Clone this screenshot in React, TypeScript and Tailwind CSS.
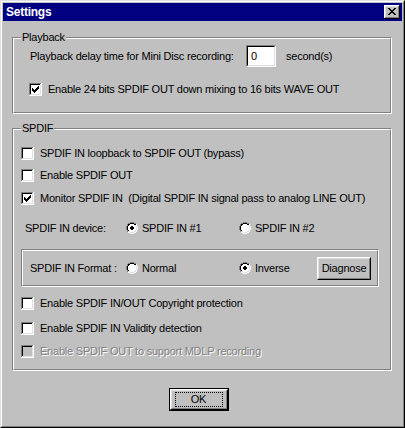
import { ReactNode } from 'react';

const COLORS: Record<string, string> = {
  G: '#808080',
  K: '#000000',
  W: '#ffffff',
  L: '#dfdfdf',
  S: '#c0c0c0',
};

// draws a small pixel map as crisp svg rects
function Pixels({ rows, w, h }: { rows: string[]; w: number; h: number }) {
  const rects: ReactNode[] = [];
  rows.forEach((row, y) => {
    row.split('').forEach((c, x) => {
      if (c === '.') return;
      rects.push(<rect key={`${x}-${y}`} x={x} y={y} width={1} height={1} fill={COLORS[c]} />);
    });
  });
  return (
    <svg width={w} height={h} viewBox={`0 0 ${w} ${h}`} shapeRendering="crispEdges" className="shrink-0 block">
      {rects}
    </svg>
  );
}

const RADIO = [
  '....GGGG....',
  '..GGKKKKGG..',
  '.GKKWWWWKKW.',
  '.GKWWWWWWLW.',
  'GKWWWWWWWWLW',
  'GKWWWWWWWWLW',
  'GKWWWWWWWWLW',
  'GKWWWWWWWWLW',
  '.GKWWWWWWLW.',
  '.GLLWWWWLLW.',
  '..WWLLLLWW..',
  '....WWWW....',
];

const DOT = ['....KK....', '...KKKK...', '...KKKK...', '....KK....'];

function Radio({ on }: { on?: boolean }) {
  const rows = RADIO.map((r, y) => {
    if (!on || y < 4 || y > 7) return r;
    const d = DOT[y - 4];
    return r
      .split('')
      .map((c, x) => (x >= 1 && x <= 10 && d[x - 1] === 'K' ? 'K' : c))
      .join('');
  });
  return <Pixels rows={rows} w={12} h={12} />;
}

const CHECK = ['......X', '.....XX', 'X...XXX', 'XX.XXX.', 'XXXXX..', '.XXX...', '..X....'];
const CROSS = ['XX....XX', '.XX..XX.', '..XXXX..', '...XX...', '..XXXX..', '.XX..XX.', 'XX....XX'];

function Checkbox({ on, disabled }: { on?: boolean; disabled?: boolean }) {
  const fill = disabled ? 'S' : 'W';
  const rows: string[] = [];
  for (let y = 0; y < 13; y++) {
    let r = '';
    for (let x = 0; x < 13; x++) {
      let c = 'W';
      if (y === 12 || x === 12) c = 'W';
      else if (y === 0 || x === 0) c = 'G';
      else if (y === 11 || x === 11) c = 'L';
      else if (y === 1 || x === 1) c = 'K';
      else {
        c = fill;
        const cy = y - 3;
        const cx = x - 3;
        if (on && cy >= 0 && cy < 7 && cx >= 0 && cx < 7 && CHECK[cy][cx] === 'X') c = 'K';
      }
      r += c;
    }
    rows.push(r);
  }
  return <Pixels rows={rows} w={13} h={13} />;
}

// title bar close button, bevel + cross in one bitmap
function CloseButton() {
  const rows: string[] = [];
  for (let y = 0; y < 14; y++) {
    let r = '';
    for (let x = 0; x < 16; x++) {
      let c = 'S';
      if (x === 15 || y === 13) c = 'K';
      else if (x === 0 || y === 0) c = 'W';
      else if (x === 14 || y === 12) c = 'G';
      else if (x === 1 || y === 1) c = 'L';
      else {
        const cy = y - 3;
        const cx = x - 4;
        if (cy >= 0 && cy < 7 && cx >= 0 && cx < 8 && CROSS[cy][cx] === 'X') c = 'K';
      }
      r += c;
    }
    rows.push(r);
  }
  return <Pixels rows={rows} w={16} h={14} />;
}

function CheckRow({ label, on, disabled, className = '' }: { label: string; on?: boolean; disabled?: boolean; className?: string }) {
  return (
    <div className={`flex items-center h-[13px] ${className}`}>
      <Checkbox on={on} disabled={disabled} />
      <span
        className={`ml-[6px] whitespace-pre ${disabled ? 'text-[#808080] [text-shadow:1px_1px_0_#ffffff]' : ''}`}
      >
        {label}
      </span>
    </div>
  );
}

function Group({ title, className = '', children }: { title: string; className?: string; children: ReactNode }) {
  return (
    <div className={`relative border border-t-[#808080] border-l-[#808080] border-b-white border-r-white ${className}`}>
      <div className="h-full border border-t-white border-l-white border-b-[#808080] border-r-[#808080]">{children}</div>
      <span className="absolute left-[8px] top-[-8px] px-[1px] bg-[#c0c0c0] leading-[14px]">{title}</span>
    </div>
  );
}

function Button({ children, className = '' }: { children: ReactNode; className?: string }) {
  return (
    <div className={`shrink-0 border border-t-white border-l-white border-b-black border-r-black ${className}`}>
      <div className="h-full flex items-center justify-center border border-t-[#dfdfdf] border-l-[#dfdfdf] border-b-[#808080] border-r-[#808080]">
        {children}
      </div>
    </div>
  );
}

export default function App() {
  return (
    <div className="w-[405px] h-[428px] bg-[#c0c0c0] text-black text-[11px] tracking-[-0.22px] leading-[13px] font-['Liberation_Sans',Arial,sans-serif] select-none">
      <div className="h-full border border-t-[#dfdfdf] border-l-[#dfdfdf] border-b-black border-r-black">
        <div className="h-full p-px border border-t-white border-l-white border-b-[#808080] border-r-[#808080] flex flex-col">
          {/* title bar */}
          <div className="h-[18px] bg-[#000080] flex items-center pl-[3px] pr-[2px]">
            <span className="text-white font-bold text-[12px] tracking-[-0.25px] flex-1">Settings</span>
            <CloseButton />
          </div>

          {/* playback */}
          <Group title="Playback" className="ml-[9px] mt-[16px] w-[380px] h-[77px]">
            <div className="flex items-center h-[22px] mt-[6px] pl-[16px]">
              <span className="w-[216px] whitespace-nowrap">Playback delay time for Mini Disc recording:</span>
              <div className="w-[30px] h-[22px] border border-t-[#808080] border-l-[#808080] border-b-white border-r-white">
                <div className="h-full bg-white border border-t-black border-l-black border-b-[#dfdfdf] border-r-[#dfdfdf] pl-[3px] flex items-center">
                  0
                </div>
              </div>
              <span className="ml-[10px]">second(s)</span>
            </div>
            <CheckRow className="mt-[16px] pl-[15px]" on label="Enable 24 bits SPDIF OUT down mixing to 16 bits WAVE OUT" />
          </Group>

          {/* spdif */}
          <Group title="SPDIF" className="ml-[9px] mt-[14px] w-[380px] h-[243px]">
            <div className="pl-[7px] pt-[17px] flex flex-col">
              <CheckRow label="SPDIF IN loopback to SPDIF OUT (bypass)" />
              <CheckRow className="mt-[9px]" label="Enable SPDIF OUT" />
              <CheckRow className="mt-[10px]" on label="Monitor SPDIF IN  (Digital SPDIF IN signal pass to analog LINE OUT)" />

              <div className="flex items-center h-[12px] mt-[17px] pl-[4px]">
                <span className="w-[101px] whitespace-nowrap">SPDIF IN device:</span>
                <div className="w-[113px] flex items-center">
                  <Radio on />
                  <span className="ml-[4px]">SPDIF IN #1</span>
                </div>
                <div className="flex items-center">
                  <Radio />
                  <span className="ml-[4px]">SPDIF IN #2</span>
                </div>
              </div>

              <div className="mt-[15px] w-[358px] h-[38px] border border-t-[#808080] border-l-[#808080] border-b-white border-r-white">
                <div className="h-full flex items-center pl-[7px] border border-t-white border-l-white border-b-[#808080] border-r-[#808080]">
                  <span className="w-[96px] whitespace-nowrap">SPDIF IN Format :</span>
                  <div className="w-[113px] flex items-center">
                    <Radio />
                    <span className="ml-[4px]">Normal</span>
                  </div>
                  <div className="w-[78px] flex items-center">
                    <Radio on />
                    <span className="ml-[4px]">Inverse</span>
                  </div>
                  <Button className="w-[54px] h-[23px]">Diagnose</Button>
                </div>
              </div>

              <CheckRow className="mt-[10px]" label="Enable SPDIF IN/OUT Copyright protection" />
              <CheckRow className="mt-[12px]" label="Enable SPDIF IN Validity detection" />
              <CheckRow className="mt-[10px]" disabled label="Enable SPDIF OUT to support MDLP recording" />
            </div>
          </Group>

          {/* ok */}
          <div className="mt-[17px] flex justify-center">
            <div className="ml-[-8px] w-[60px] h-[23px] border border-black">
              <Button className="h-full">
                <div className="w-[48px] h-[15px] border border-dotted border-black flex items-center justify-center">
                  OK
                </div>
              </Button>
            </div>
          </div>
        </div>
      </div>
    </div>
  );
}
